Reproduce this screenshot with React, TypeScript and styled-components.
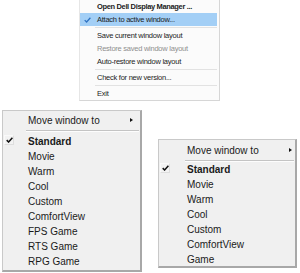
import React from "react";
import styled, { createGlobalStyle } from "styled-components";


const GlobalStyle = createGlobalStyle`
    html, body {
        margin: 0;
        padding: 0;
        background: #ffffff;
    }
    body {
        font-family: "Liberation Sans", Arial, sans-serif;
    }
`;

const Page = styled.div`
    width: 300px;
    height: 273px;
    overflow: hidden;
    display: flex;
    flex-direction: column;
`;

const TopRow = styled.div`
    display: flex;
    padding-left: 79px;
`;

const BottomRow = styled.div`
    display: flex;
    align-items: flex-start;
    margin-top: 9px;
    padding-left: 2px;
`;

// tray menu (top picture)

const TrayMenu = styled.div`
    width: 141px;
    box-sizing: border-box;
    background: #fbfbfb;
    border-left: 1px solid #e6e6e6;
    border-right: 1px solid #d6d6d6;
    border-bottom: 1px solid #d6d6d6;
    padding-right: 2px;
    display: flex;
    flex-direction: column;
    font-size: 7.5px;
    letter-spacing: -0.25px;
`;

const TrayItem = styled.div<{ $active?: boolean; $disabled?: boolean; $bold?: boolean }>`
    position: relative;
    height: 13px;
    line-height: 13px;
    padding-left: 17px;
    white-space: nowrap;
    background: ${p => (p.$active ? "#a3cff6" : "transparent")};
    color: ${p => (p.$disabled ? "#8f8f8f" : "#1c1c1c")};
    font-weight: ${p => (p.$bold ? 700 : 400)};
    letter-spacing: ${p => (p.$bold ? "-0.35px" : "-0.25px")};
`;

const TraySeparator = styled.div`
    height: 3px;
    display: flex;
    align-items: center;
    &::after {
        content: "";
        flex: 1;
        height: 1px;
        margin-left: 15px;
        background: #e2e2e2;
    }
`;

const TrayCheck = styled.svg`
    position: absolute;
    left: 4px;
    top: 4px;
`;

// context menus (bottom pictures)

const ContextMenu = styled.div<{ $width: number; $height?: number; $top: number; $padTop: number }>`
    width: ${p => p.$width}px;
    ${p => (p.$height ? `height: ${p.$height}px; overflow: hidden;` : "")}
    margin-top: ${p => p.$top}px;
    box-sizing: border-box;
    background: #f0f0f0;
    border-top: 1px solid #c9c9c9;
    border-left: 1px solid #c9c9c9;
    border-right: 2px solid #a8a8a8;
    border-bottom: 2px solid #a8a8a8;
    padding: ${p => p.$padTop}px 0 1px;
    display: flex;
    flex-direction: column;
    font-size: 10px;
    color: #1a1a1a;
    & + & {
        margin-left: 16px;
    }
`;

const MenuItem = styled.div<{ $gutter: number; $bold?: boolean }>`
    position: relative;
    height: 15px;
    line-height: 15px;
    padding-left: ${p => p.$gutter}px;
    display: flex;
    align-items: center;
    white-space: nowrap;
    font-weight: ${p => (p.$bold ? 700 : 400)};
`;

const SubArrow = styled.span<{ $trail: number }>`
    margin-left: auto;
    margin-right: ${p => p.$trail}px;
    margin-top: -2px;
    width: 0;
    height: 0;
    border-top: 2.5px solid transparent;
    border-bottom: 2.5px solid transparent;
    border-left: 3px solid #111;
`;

const MenuSeparator = styled.div<{ $gutter: number }>`
    height: 6px;
    box-sizing: border-box;
    padding-top: 2px;
    padding-left: ${p => p.$gutter - 2}px;
    padding-right: 1px;
    &::after {
        content: "";
        display: block;
        border-top: 1px solid #c4c4c4;
        border-bottom: 1px solid #fdfdfd;
    }
`;

const CheckBox = styled.span`
    position: absolute;
    left: 1px;
    top: 1px;
    width: 10px;
    height: 10px;
    box-sizing: border-box;
    border: 1px solid #fafafa;
    border-right-color: #dedede;
    border-bottom-color: #dedede;
    background: #f3f3f3;
    display: flex;
    align-items: center;
    justify-content: center;
`;

const Check: React.FC<{ color: string }> = ({ color }) => (
    <svg width="7" height="6" viewBox="0 0 7 6">
        <path d="M0.7 3.1 L2.6 5 L6.4 0.8" fill="none" stroke={color} strokeWidth="1.5" />
    </svg>
);

type ModeMenuProps = {
    modes: string[];
    gutter: number;
    trail: number;
    width: number;
    top: number;
    padTop: number;
    height?: number;
};

const ModeMenu: React.FC<ModeMenuProps> = ({ modes, gutter, trail, width, top, padTop, height }) => (
    <ContextMenu $width={width} $height={height} $top={top} $padTop={padTop}>
        <MenuItem $gutter={gutter}>
            Move window to
            <SubArrow $trail={trail} />
        </MenuItem>
        <MenuSeparator $gutter={gutter} />
        {modes.map((m, i) => (
            <MenuItem key={m} $gutter={gutter} $bold={i === 0}>
                {i === 0 && (
                    <CheckBox>
                        <Check color="#111" />
                    </CheckBox>
                )}
                {m}
            </MenuItem>
        ))}
    </ContextMenu>
);

export default function App() {
    return (
        <Page>
            <GlobalStyle />
            <TopRow>
                <TrayMenu>
                    <TrayItem $bold>Open Dell Display Manager ...</TrayItem>
                    <TrayItem $active>
                        <TrayCheck width="7" height="6" viewBox="0 0 7 6">
                            <path d="M0.7 3.1 L2.6 5 L6.4 0.8" fill="none" stroke="#2f73c2" strokeWidth="1.3" />
                        </TrayCheck>
                        Attach to active window...
                    </TrayItem>
                    <TraySeparator />
                    <TrayItem>Save current window layout</TrayItem>
                    <TrayItem $disabled>Restore saved window layout</TrayItem>
                    <TrayItem>Auto-restore window layout</TrayItem>
                    <TraySeparator />
                    <TrayItem>Check for new version...</TrayItem>
                    <TraySeparator />
                    <TrayItem>Exit</TrayItem>
                </TrayMenu>
            </TopRow>
            <BottomRow>
                <ModeMenu
                    modes={["Standard", "Movie", "Warm", "Cool", "Custom", "ComfortView", "FPS Game", "RTS Game", "RPG Game"]}
                    gutter={25}
                    trail={7}
                    width={140}
                    top={0}
                    padTop={2}
                />
                <ModeMenu
                    modes={["Standard", "Movie", "Warm", "Cool", "Custom", "ComfortView", "Game"]}
                    gutter={28}
                    trail={3}
                    width={139}
                    top={29}
                    padTop={3}
                    height={129}
                />
            </BottomRow>
        </Page>
    );
}
